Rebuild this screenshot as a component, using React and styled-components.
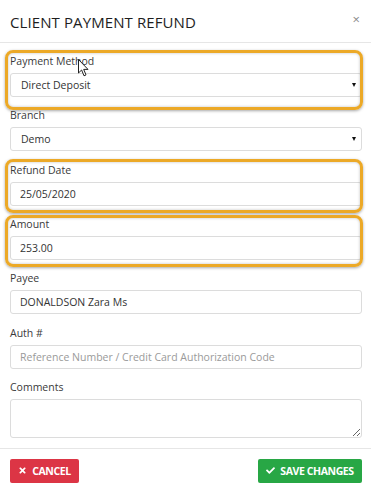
import React from "react";
import styled, { createGlobalStyle } from "styled-components";
import { FaTimes, FaCheck } from "react-icons/fa";

const Global = createGlobalStyle`
  html, body { margin: 0; padding: 0; background: #fff; }
  body { font-family: "Open Sans", "Noto Sans", sans-serif; color: #333; }
  * { box-sizing: border-box; }
`;

const Modal = styled.div`
  position: relative;
  width: 371px;
  height: 494px;
  background: #fff;
  overflow: hidden;
`;

const Header = styled.div`
  height: 43px;
  display: flex;
  align-items: center;
  justify-content: space-between;
  padding: 0 10px 0 10px;
  border-bottom: 1px solid #e6e6e6;
`;

const Title = styled.h4`
  margin: 0;
  margin-top: 1px;
  font-size: 15px;
  font-weight: 400;
  color: #1e1e1e;
  letter-spacing: 0.1px;
`;

const Close = styled.span`
  font-size: 13px;
  color: #8a8a8a;
  margin-top: -4px;
  margin-right: 1px;
`;

const Body = styled.div`
  padding: 11px 9px 0 10px;
`;

const Group = styled.div`
  position: relative;
  margin-bottom: ${(p) => (p.$last ? "10px" : "11.33px")};
  ${(p) =>
    p.$hl
      ? `
  &::before {
    content: "";
    position: absolute;
    top: ${p.$top}px;
    left: -5px;
    right: -1px;
    bottom: ${p.$bottom}px;
    border: 3px solid #eca927;
    border-radius: 8px;
    box-shadow: 0 1px 3px rgba(0,0,0,0.35), inset 0 0 3px rgba(0,0,0,0.25);
    pointer-events: none;
    z-index: 2;
  }`
      : ""}
`;

const Label = styled.label`
  display: block;
  font-size: 10.5px;
  line-height: 14px;
  color: #3a3a3a;
  margin-bottom: 5px;
`;

const Input = styled.input`
  display: block;
  width: 100%;
  height: 24px;
  border: 1px solid #dcdcdc;
  border-radius: 3px;
  padding: 0 9px;
  font-family: inherit;
  font-size: 10.5px;
  color: #333;
  background: #fff;
  outline: none;
  &::placeholder { color: #9a9a9a; }
`;

const SelectWrap = styled.div`
  position: relative;
  &::after {
    content: "";
    position: absolute;
    right: 6px;
    top: 10px;
    border-left: 2.5px solid transparent;
    border-right: 2.5px solid transparent;
    border-top: 4px solid #111;
    pointer-events: none;
  }
`;

const Select = styled.select`
  display: block;
  width: 100%;
  height: 24px;
  border: 1px solid #dcdcdc;
  border-radius: 3px;
  padding: 0 10px;
  font-family: inherit;
  font-size: 10.5px;
  color: #333;
  background: #fff;
  appearance: none;
  -webkit-appearance: none;
  outline: none;
`;

const TextArea = styled.textarea`
  display: block;
  width: 100%;
  height: 39px;
  border: 1px solid #dcdcdc;
  border-radius: 3px;
  font-family: inherit;
  font-size: 10.5px;
  resize: vertical;
  outline: none;
`;

const Footer = styled.div`
  display: flex;
  justify-content: space-between;
  padding: 10px 9px 10px 10px;
  border-top: 1px solid #e6e6e6;
`;

const Button = styled.button`
  display: flex;
  align-items: center;
  justify-content: center;
  gap: 5px;
  height: 24px;
  width: ${(p) => p.$w}px;
  border: none;
  border-radius: 2px;
  background: ${(p) => p.$bg};
  color: #fff;
  font-family: "Open Sans", sans-serif;
  font-weight: 700;
  font-size: 10.5px;
  letter-spacing: -0.4px;
  padding: 0;
  svg { width: 9px; height: 9px; }
`;

const Cursor = styled.svg`
  position: absolute;
  left: 78px;
  top: 59px;
  width: 11px;
  height: 18px;
  z-index: 3;
`;

export default function App() {
  return (
    <>
      <Global />
      <Modal>
        <Header>
          <Title>CLIENT PAYMENT REFUND</Title>
          <Close>×</Close>
        </Header>
        <Body>
          <Group $hl $top={-4} $bottom={-13}>
            <Label>Payment Method</Label>
            <SelectWrap>
              <Select defaultValue="dd">
                <option value="dd">Direct Deposit</option>
              </Select>
            </SelectWrap>
          </Group>
          <Group>
            <Label>Branch</Label>
            <SelectWrap>
              <Select defaultValue="demo">
                <option value="demo">Demo</option>
              </Select>
            </SelectWrap>
          </Group>
          <Group $hl $top={-4} $bottom={-7}>
            <Label>Refund Date</Label>
            <Input defaultValue="25/05/2020" />
          </Group>
          <Group $hl $top={-2} $bottom={-7}>
            <Label>Amount</Label>
            <Input defaultValue="253.00" />
          </Group>
          <Group>
            <Label>Payee</Label>
            <Input defaultValue="DONALDSON Zara Ms" />
          </Group>
          <Group>
            <Label>Auth #</Label>
            <Input placeholder="Reference Number / Credit Card Authorization Code" />
          </Group>
          <Group $last>
            <Label>Comments</Label>
            <TextArea />
          </Group>
        </Body>
        <Footer>
          <Button $bg="#dc3545" $w={69}>
            <FaTimes /> CANCEL
          </Button>
          <Button $bg="#28a745" $w={104}>
            <FaCheck /> SAVE CHANGES
          </Button>
        </Footer>
        <Cursor viewBox="0 0 11 18">
          <path
            d="M0.5 0.5 L0.5 14 L3.6 11 L6 16.8 L8 15.9 L5.7 10.4 L10 10.4 Z"
            fill="#fff"
            stroke="#222"
            strokeWidth="1"
            strokeLinejoin="round"
          />
        </Cursor>
      </Modal>
    </>
  );
}
